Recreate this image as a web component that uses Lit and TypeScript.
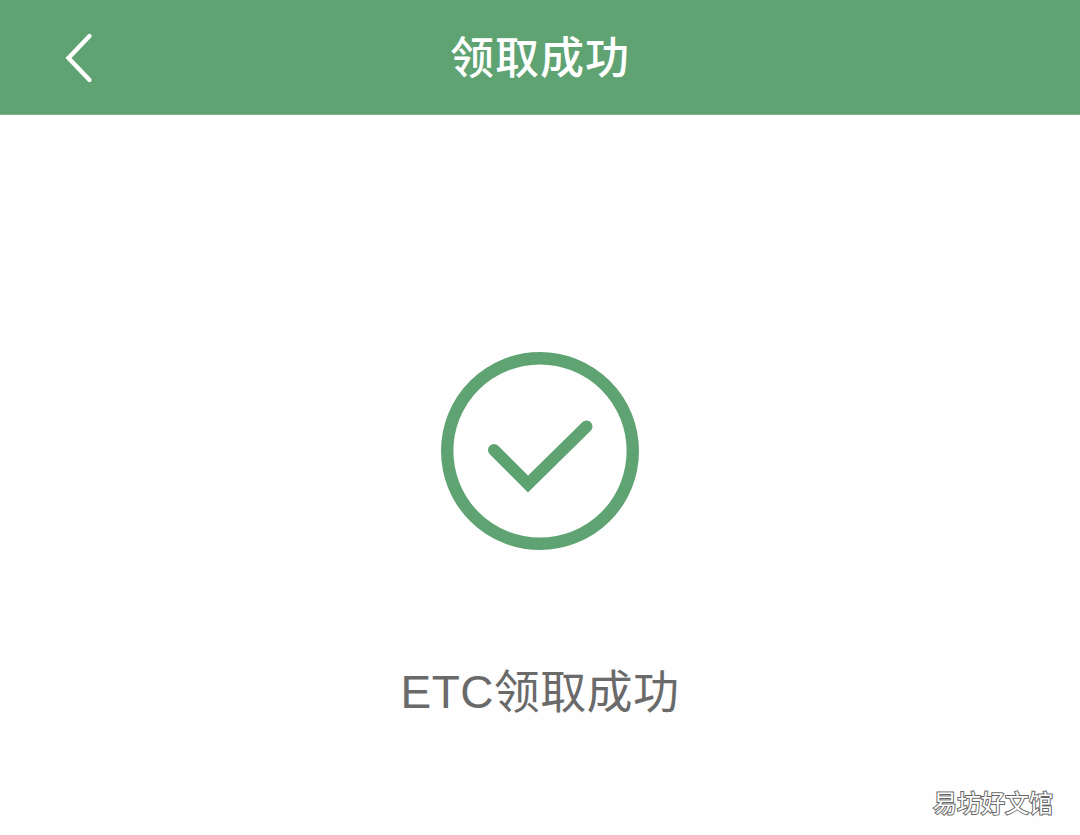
import { LitElement, html, css } from "lit";
import { customElement } from "lit/decorators.js";

@customElement("app-root")
export class AppRoot extends LitElement {
  static styles = css`
    :host {
      display: block;
      position: relative;
      width: 1080px;
      height: 835px;
      overflow: hidden;
      background: #fefefe;
      font-family: "Liberation Sans", "Noto Sans CJK SC", sans-serif;
    }
    .bar {
      height: 114px;
      background: #5fa373;
      display: grid;
      grid-template-columns: 1fr auto 1fr;
      align-items: center;
      border-bottom: 1px solid #7db28d;
    }
    .back {
      display: block;
      margin-left: 62px;
      width: 34px;
      height: 52px;
      margin-top: 1px;
    }
    .title {
      color: #fff;
      font-size: 44px;
      line-height: 118px;
      height: 114px;
      font-weight: 500;
      letter-spacing: 1px;
    }
    .main {
      display: flex;
      flex-direction: column;
      align-items: center;
      padding-top: 237px;
    }
    .ok {
      display: block;
      width: 198px;
      height: 198px;
    }
    .msg {
      margin-top: 112px;
      color: #6a6a6a;
      font-size: 46px;
      line-height: 60px;
      letter-spacing: 0.4px;
    }
    .mark {
      position: absolute;
      right: 27px;
      bottom: 16px;
      font-size: 24px;
      line-height: 30px;
      color: #fff;
      -webkit-text-stroke: 2px #666;
      paint-order: stroke fill;
    }
  `;

  render() {
    return html`
      <div class="bar">
        <svg class="back" viewBox="0 0 34 52">
          <path d="M27.5 4 L6.5 26 L27.5 48" fill="none" stroke="#fff" stroke-width="4.4" stroke-linecap="round" stroke-linejoin="miter" />
        </svg>
        <div class="title">领取成功</div>
        <div></div>
      </div>
      <div class="main">
        <svg class="ok" viewBox="0 0 198 198">
          <circle cx="99" cy="99" r="92.8" fill="none" stroke="#5fa373" stroke-width="12.4" />
          <path d="M53 98 L87 132 L145.5 74.5" fill="none" stroke="#5fa373" stroke-width="12" stroke-linecap="round" stroke-linejoin="miter" />
        </svg>
        <div class="msg">ETC领取成功</div>
      </div>
      <div class="mark">易坊好文馆</div>
    `;
  }
}
